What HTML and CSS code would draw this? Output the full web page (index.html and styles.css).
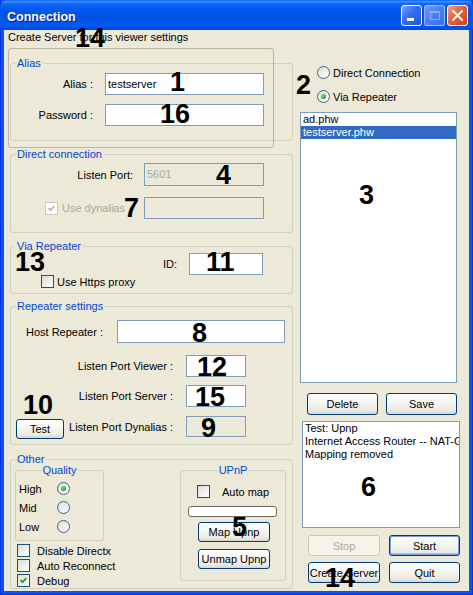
FILE: index.html
```html
<!DOCTYPE html>
<html>
<head>
<meta charset="utf-8">
<link rel="stylesheet" href="styles.css">
</head>
<body>
<div class="window">
  <div class="titlebar">
    <span class="title">Connection</span>
    <div class="tbtns">
      <span class="tb tb-min"><i></i></span>
      <span class="tb tb-max"><i></i></span>
      <span class="tb tb-close"><svg width="19" height="19" viewBox="0 0 19 19"><path d="M5 5 L14 14 M14 5 L5 14" stroke="#fff" stroke-width="2" stroke-linecap="round"/></svg></span>
    </div>
  </div>
  <div class="client">
    <div class="caption">Create Server for this viewer settings</div>
    <div class="main">
      <div class="leftcol">
        <fieldset class="gb">
          <legend>Alias</legend>
          <div class="alias-body">
            <div class="row r22"><span class="lbl w82">Alias :</span><div class="field f-alias">testserver</div></div>
            <div class="row r22 mt9"><span class="lbl w82">Password :</span><div class="field f-alias"></div></div>
          </div>
        </fieldset>

        <fieldset class="gb mt7">
          <legend>Direct connection</legend>
          <div class="direct-body">
            <div class="row r23"><span class="lbl w122">Listen Port:</span><div class="field dis f-port">5601</div></div>
            <div class="row r22 mt11">
              <span class="cbwrap w122d"><span class="cb cb-dis"><svg width="11" height="11" viewBox="0 0 11 11"><path d="M2.5 5 L4.5 7.2 L8.5 3" fill="none" stroke="#B9B7A8" stroke-width="1.8"/></svg></span><span class="distext">Use dynalias</span></span>
              <div class="field dis f-port"></div>
            </div>
          </div>
        </fieldset>

        <fieldset class="gb mt7">
          <legend>Via Repeater</legend>
          <div class="via-body">
            <div class="row r22"><span class="lbl w166">ID:</span><div class="field f-id"></div></div>
            <div class="crow https"><span class="cb"></span><span class="ctext3">Use Https proxy</span></div>
          </div>
        </fieldset>

        <fieldset class="gb mt6">
          <legend>Repeater settings</legend>
          <div class="rs-body">
            <div class="row r23"><span class="lbl w92">Host Repeater :</span><div class="field f-host"></div></div>
            <div class="row r22 mt12"><span class="slot"></span><span class="lbl w106">Listen Port Viewer :</span><div class="field f-small"></div></div>
            <div class="row r22 mt8"><span class="slot"></span><span class="lbl w106">Listen Port Server :</span><div class="field f-small"></div></div>
            <div class="row r21 mt9"><span class="slot"><span class="btn btn-test">Test</span></span><span class="lbl w106">Listen Port Dynalias :</span><div class="field dis f-small f-dyn"></div></div>
          </div>
        </fieldset>

        <fieldset class="gb mt8">
          <legend>Other</legend>
          <div class="other-body">
            <div class="other-left">
              <fieldset class="gb gb-quality">
                <legend class="center">Quality</legend>
                <div class="quality-body">
                  <div class="qrow"><span class="qlbl">High</span><span class="radio on"></span></div>
                  <div class="qrow"><span class="qlbl">Mid</span><span class="radio"></span></div>
                  <div class="qrow"><span class="qlbl">Low</span><span class="radio"></span></div>
                </div>
              </fieldset>
              <div class="checks">
                <div class="crow c15"><span class="cb"></span><span class="ctext7">Disable Directx</span></div>
                <div class="crow c15"><span class="cb"></span><span class="ctext7">Auto Reconnect</span></div>
                <div class="crow c15"><span class="cb"><svg width="11" height="11" viewBox="0 0 11 11"><path d="M2.5 5 L4.5 7.2 L8.5 3" fill="none" stroke="#21A121" stroke-width="1.8"/></svg></span><span class="ctext7">Debug</span></div>
              </div>
            </div>
            <fieldset class="gb gb-upnp">
              <legend class="center">UPnP</legend>
              <div class="upnp-body">
                <div class="crow automap"><span class="cb"></span><span class="ctext12">Auto map</span></div>
                <div class="progress"></div>
                <span class="btn btn-upnp mt5">Map Upnp</span>
                <span class="btn btn-upnp mt7">Unmap Upnp</span>
              </div>
            </fieldset>
          </div>
        </fieldset>
      </div>

      <div class="rightcol">
        <div class="rrow first"><span class="radio"></span><span class="rtext">Direct Connection</span></div>
        <div class="rrow second"><span class="radio on"></span><span class="rtext">Via Repeater</span></div>
        <div class="listbox">
          <div class="item">ad.phw</div>
          <div class="item sel">testserver.phw</div>
        </div>
        <div class="btnrow br1">
          <span class="btn b71">Delete</span>
          <span class="btn b71">Save</span>
        </div>
        <div class="log">
          <div>Test: Upnp</div>
          <div>Internet Access Router -- NAT-G</div>
          <div>Mapping removed</div>
        </div>
        <div class="btnrow br2">
          <span class="btn b72 disabled">Stop</span>
          <span class="btn b71 def">Start</span>
        </div>
        <div class="btnrow br3">
          <span class="btn b72">Create Server</span>
          <span class="btn b71">Quit</span>
        </div>
      </div>
    </div>
  </div>

  <div class="panel-outline"></div>

  <span class="num n14a">14</span>
  <span class="num n1">1</span>
  <span class="num n16">16</span>
  <span class="num n2">2</span>
  <span class="num n3">3</span>
  <span class="num n4">4</span>
  <span class="num n7">7</span>
  <span class="num n13">13</span>
  <span class="num n11">11</span>
  <span class="num n8">8</span>
  <span class="num n12">12</span>
  <span class="num n10">10</span>
  <span class="num n15">15</span>
  <span class="num n9">9</span>
  <span class="num n5">5</span>
  <span class="num n6">6</span>
  <span class="num n14b">14</span>
</div>
</body>
</html>
```

FILE: styles.css
```css
* { box-sizing: border-box; }
html, body { margin: 0; padding: 0; }
body {
  width: 473px; height: 595px; overflow: hidden;
  font-family: "Liberation Sans", Arial, sans-serif;
  font-size: 11px; color: #000; background: #fff;
}
.window {
  position: relative;
  width: 473px; height: 595px;
  background: #0058EE;
  box-shadow: inset 1px 0 #0831D9, inset -1px 0 #0831D9, inset 0 -1px #0831D9;
  padding-bottom: 4px;
  display: flex; flex-direction: column;
}

/* title bar */
.titlebar {
  height: 30px; flex: none;
  display: flex; align-items: center;
  padding: 0 5px 0 7px;
  background: linear-gradient(to bottom, #0A5FEF 0%, #3C8FFF 5%, #1468F5 12%, #0058EE 30%, #0054E3 60%, #0059EF 85%, #0048DA 100%);
  border-radius: 7px 7px 0 0;
}
.title {
  color: #fff; font-weight: bold; font-size: 12.5px;
  padding-top: 4px;
  text-shadow: 1px 1px 0 #0A1883;
}
.tbtns { margin-left: auto; display: flex; gap: 2px; }
.tb {
  position: relative;
  width: 21px; height: 21px;
  border: 1px solid #fff; border-radius: 3px;
  display: flex; align-items: center; justify-content: center;
}
.tb-min { background: linear-gradient(135deg, #7FA8FF 0%, #3770F0 40%, #1F55D8 100%); }
.tb-min i { position: absolute; left: 5px; top: 12px; width: 7px; height: 3px; background: #fff; }
.tb-max {
  background: linear-gradient(135deg, #6C9BFA 0%, #4A7FF2 50%, #3A6EE8 100%);
  border-color: rgba(255,255,255,0.45);
}
.tb-max i {
  width: 10px; height: 9px;
  border: 1px solid rgba(255,255,255,0.35); border-top-width: 2px;
}
.tb-close { background: linear-gradient(135deg, #F3A081 0%, #E5623C 45%, #CC4220 100%); }

/* client */
.client {
  flex: 1; margin: 0 4px;
  background: #ECE9D8;
}
.caption { padding: 1px 0 0 4px; line-height: 13px; height: 14px; }
.main { display: flex; align-items: flex-start; }
.leftcol { margin: 13px 0 0 6px; width: 283px; flex: none; }
.rightcol { margin: 22px 0 0 4px; width: 164px; flex: none; }

/* group boxes */
.gb {
  margin: 0; padding: 0; min-width: 0;
  border: 1px solid #D0D0BF; border-radius: 3px;
}
.gb > legend {
  padding: 0 2px; margin-left: 4px;
  line-height: 13px; color: #0046D5; font-size: 11px;
}
.gb > legend.center { margin-left: auto; margin-right: auto; padding: 0 1px; }

.mt5 { margin-top: 5px; }
.mt6 { margin-top: 6px; }
.mt7 { margin-top: 7px; }
.mt8 { margin-top: 8px; }
.mt9 { margin-top: 9px; }
.mt11 { margin-top: 11px; }
.mt12 { margin-top: 12px; }

.row { display: flex; align-items: center; }
.r21 { height: 21px; }
.r22 { height: 22px; }
.r23 { height: 23px; }
.lbl { display: flex; justify-content: flex-end; white-space: nowrap; flex: none; }
.w82 { width: 82px; margin-right: 12px; }
.w92 { width: 92px; margin-right: 14px; }
.w106 { width: 106px; margin-right: 13px; }
.w122 { width: 122px; margin-right: 11px; }
.w166 { width: 166px; margin-right: 12px; }

.field {
  height: 100%; flex: none;
  border: 1px solid #7F9DB9; background: #fff;
  padding-left: 2px; line-height: 20px; white-space: nowrap; overflow: hidden;
}
.field.dis { background: #ECE9D8; color: #ACA899; }
.f-alias { width: 159px; }
.f-port { width: 120px; }
.f-id { width: 74px; }
.f-host { width: 168px; }
.f-small { width: 60px; }

.alias-body { height: 70px; padding-top: 3px; }
.direct-body { height: 71px; padding-top: 2px; }
.via-body { height: 40px; }
.rs-body { height: 131px; padding-top: 7px; }
.other-body { height: 122px; display: flex; align-items: flex-start; }

.cbwrap { display: flex; align-items: center; flex: none; }
.w122d { width: 122px; margin-right: 11px; padding-left: 34px; }
.distext { color: #ACA899; margin-left: 4px; }

/* checkbox */
.cb {
  width: 13px; height: 13px; flex: none;
  border: 1px solid #1C5180;
  background: linear-gradient(135deg, #DCDCD7 0%, #F4F4F0 70%, #FFFFFF 100%);
  display: flex; align-items: center; justify-content: center;
}
.cb svg { display: block; }
.cb-dis { border-color: #CAC8BB; background: #fff; }
.crow { display: flex; align-items: center; }
.https { height: 13px; margin-left: 30px; }
.ctext3 { margin-left: 3px; }
.ctext7 { margin-left: 7px; }
.ctext12 { margin-left: 12px; }
.c15 { height: 15px; margin-left: 6px; }

/* radio */
.radio {
  width: 13px; height: 13px; flex: none; border-radius: 50%;
  border: 1px solid #3A648D;
  background: linear-gradient(135deg, #DCDCD7 0%, #F2F2EE 60%, #FFFFFF 100%);
  display: flex; align-items: center; justify-content: center;
}
.radio.on::after {
  content: ""; width: 5px; height: 5px; border-radius: 50%;
  background: radial-gradient(circle at 35% 35%, #7BE07A, #21A121 70%);
}

/* repeater settings */
.slot { width: 56px; flex: none; align-self: flex-start; height: 100%; }
.btn {
  display: flex; align-items: center; justify-content: center;
  border: 1px solid #003C74; border-radius: 3px;
  background: linear-gradient(to bottom, #FFFFFF 0%, #F7F7F4 35%, #ECEBE6 80%, #D8D4CA 100%);
  font-size: 11px; white-space: nowrap; flex: none;
}
.btn-test { width: 48px; height: 20px; margin: 3px 0 0 5px; }

/* other */
.other-left { width: 169px; flex: none; }
.gb-quality { width: 89px; margin: -2px 0 0 4px; }
.quality-body { height: 63px; padding-top: 2px; }
.qrow { height: 19px; display: flex; align-items: center; padding-left: 3px; }
.qlbl { width: 38px; flex: none; }
.checks { margin-top: 2px; }
.gb-upnp { width: 106px; margin-top: -2px; flex: none; }
.upnp-body { height: 103px; padding-top: 8px; }
.automap { height: 13px; margin-left: 16px; }
.progress {
  margin: 8px 0 0 7px; width: 89px; height: 11px;
  border: 1px solid #686868; border-radius: 3px; background: #fff;
}
.btn-upnp { width: 72px; height: 20px; margin-left: 17px; }

/* right column */
.rrow { display: flex; align-items: center; height: 13px; margin-left: 20px; }
.rrow.second { margin-top: 11px; }
.rtext { margin-left: 3px; white-space: nowrap; }
.listbox {
  margin: 9px 0 0 3px; width: 157px; height: 271px;
  border: 1px solid #7F9DB9; background: #fff; padding-top: 0;
}
.item { line-height: 13px; padding-left: 2px; white-space: nowrap; }
.item.sel { background: #316AC5; color: #fff; }
.btnrow { display: flex; }
.br1 { margin: 10px 0 0 10px; gap: 8px; }
.br1 .btn { height: 22px; }
.log {
  margin: 6px 0 0 5px; width: 158px; height: 107px;
  border: 1px solid #7F9DB9; background: #fff;
  padding: 0 0 0 2px; line-height: 13px; white-space: nowrap; overflow: hidden;
}
.br2 { margin: 7px 0 0 11px; gap: 9px; }
.br3 { margin: 6px 0 0 11px; gap: 9px; }
.br2 .btn, .br3 .btn { height: 21px; }
.b71 { width: 71px; }
.b72 { width: 72px; }
.btn.disabled { border-color: #C9C7BA; background: #F5F4EA; color: #ACA899; }
.btn.def { box-shadow: inset 0 0 0 1px #7C9FE4, inset 0 -1px 0 1px #A9C2F0; }

/* overlays */
.panel-outline {
  position: absolute; left: 8px; top: 48px; width: 266px; height: 100px;
  border: 1px solid rgba(80,76,50,0.32); border-radius: 3px;
  pointer-events: none;
}
.num {
  position: absolute;
  font-family: "Liberation Sans", Arial, sans-serif;
  font-weight: bold; font-size: 27px; line-height: 27px; color: #000;
  white-space: nowrap;
}
.n14a { left: 75px; top: 25px; }
.n1 { left: 170px; top: 69px; }
.n16 { left: 160px; top: 101px; }
.n2 { left: 296px; top: 72px; }
.n3 { left: 359px; top: 182px; }
.n4 { left: 216px; top: 162px; }
.n7 { left: 124px; top: 195px; }
.n13 { left: 15px; top: 249px; }
.n11 { left: 206px; top: 249px; }
.n8 { left: 192px; top: 320px; }
.n12 { left: 197px; top: 354px; }
.n10 { left: 23px; top: 392px; }
.n15 { left: 195px; top: 384px; }
.n9 { left: 201px; top: 415px; }
.n5 { left: 232px; top: 514px; }
.n6 { left: 361px; top: 474px; }
.n14b { left: 325px; top: 565px; }
```
